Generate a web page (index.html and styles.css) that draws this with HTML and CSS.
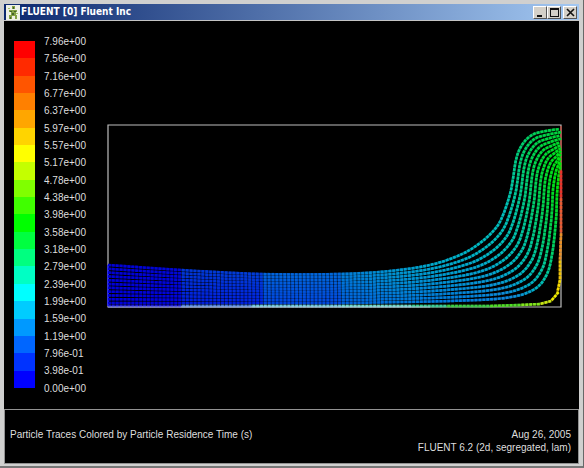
FILE: index.html
```html
<!DOCTYPE html>
<html lang="en">
<head>
<meta charset="utf-8">
<title>FLUENT [0] Fluent Inc</title>
<link rel="stylesheet" href="styles.css">
</head>
<body>
<div class="window">
  <header class="titlebar">
    <svg class="app-icon" viewBox="0 0 14 15" aria-hidden="true">
      <rect width="14" height="15" fill="#eef0e6"/>
      <path d="M6 1h3v3H6zM3 5h8v2H3zM5 7h5v4H5zM3 10h3v4H3zM9 10h2v4H9z" fill="#83a045"/>
      <path d="M7 2h1v2H7zM4 6h2v1H4zM8 6h2v1H8zM6 8h2v2H6zM4 12h1v2H4z" fill="#44632a"/>
      <path d="M2 3h2v1H2zM10 8h2v1h-2z" fill="#a9c36b"/>
    </svg>
    <h1 class="title">FLUENT [0] Fluent Inc</h1>
    <div class="controls">
      <button type="button" aria-label="Minimize"><svg viewBox="0 0 9 9"><path d="M1 7h5v2H1z"/></svg></button>
      <button type="button" aria-label="Maximize"><svg viewBox="0 0 9 9"><path fill-rule="evenodd" d="M0 0h9v9H0zM1 2v6h7V2z"/></svg></button>
      <button type="button" class="close" aria-label="Close"><svg viewBox="0 0 9 9"><path d="M1 1l7 7M8 1l-7 7" stroke="#111" stroke-width="1.6"/></svg></button>
    </div>
  </header>
  <main class="view">
    <section class="legend" aria-label="Residence time scale">
      <div class="scale" id="scale"></div>
      <ol class="labels" id="labels"></ol>
    </section>
    <svg class="plot" id="plot" viewBox="100 120 470 192" role="img" aria-label="Particle traces"></svg>
  </main>
  <footer class="caption">
    <p>Particle Traces Colored by Particle Residence Time (s)</p>
    <p class="meta">Aug 26, 2005<br>FLUENT 6.2 (2d, segregated, lam)</p>
  </footer>
</div>
<script src="script.js"></script>
</body>
</html>
```
FILE: styles.css
```css
* { box-sizing: border-box; }
body {
  margin: 0;
  background: #d4d0c8;
  font-family: "Liberation Sans", Arial, sans-serif;
  font-size: 10px;
  line-height: 13px;
  color: #dedede;
}
.window {
  display: flex;
  flex-direction: column;
  min-height: 100vh;
  padding: 4px 4px 2px;
  border-right: 1px solid #686868;
  border-bottom: 2px solid #777;
  background: #d0d0cf;
}
.titlebar {
  display: flex;
  align-items: center;
  height: 17px;
  padding: 0 2px;
  border-bottom: 1px solid #c4c4c4;
  background: linear-gradient(90deg, #0c286e, #a3c8f2);
}
.app-icon { width: 14px; height: 15px; }
.title {
  flex: 1;
  margin: 0 0 0 1px;
  font-family: "DejaVu Sans Condensed", "DejaVu Sans", sans-serif;
  font-size: 10px;
  font-weight: bold;
  line-height: 14px;
  color: #fff;
}
.controls { display: flex; }
.controls button {
  display: grid;
  place-items: center;
  width: 14px;
  height: 13px;
  padding: 0;
  border: 1px solid;
  border-color: #fff #555 #555 #fff;
  background: #d4d0c8;
}
.controls .close { margin-left: 2px; }
.controls svg { width: 9px; height: 9px; fill: #111; }
.view {
  flex: 1;
  display: flex;
  align-items: flex-start;
  padding: 12px 9px 12px 10px;
  background: #000;
}
.legend { display: flex; flex: none; width: 86px; }
.scale {
  display: flex;
  flex-direction: column;
  width: 21px;
  height: 347px;
  margin-top: 8px;
}
.scale i { flex: 1; }
.labels {
  display: flex;
  flex-direction: column;
  height: 364px;
  margin: 0 0 0 9px;
  padding: 0;
  list-style: none;
}
.labels li { flex: 1; line-height: 17px; }
.plot { flex: 1; min-width: 0; margin-top: 87px; }
.caption {
  display: flex;
  justify-content: space-between;
  align-items: center;
  min-height: 55px;
  padding: 9px 7px 0 5px;
  border: 1px solid #929292;
  background: #000;
}
.caption p { margin: 0; }
.caption > p:first-child { padding-bottom: 13px; }
.meta { text-align: right; }
```
FILE: script.js
```js
const labels = ["7.96e+00", "7.56e+00", "7.16e+00", "6.77e+00", "6.37e+00", "5.97e+00", "5.57e+00",
  "5.17e+00", "4.78e+00", "4.38e+00", "3.98e+00", "3.58e+00", "3.18e+00", "2.79e+00", "2.39e+00",
  "1.99e+00", "1.59e+00", "1.19e+00", "7.96e-01", "3.98e-01", "0.00e+00"];
const scale = ["#ff0000", "#ff2a00", "#ff5500", "#ff8000", "#ffa600", "#ffd400", "#ffff00",
  "#c4ff00", "#80ff00", "#40ff00", "#00ff00", "#00ff40", "#00ff80", "#00ffc4", "#00ffff",
  "#00ccff", "#0099ff", "#0066ff", "#0033ff", "#0000ff"];

document.getElementById("labels").innerHTML = labels.map(t => `<li>${t}</li>`).join("");
document.getElementById("scale").innerHTML = scale.map(c => `<i style="background:${c}"></i>`).join("");

// Stations along the flow: outermost trace, innermost trace, and the colour of each.
const stations = [
  [108, 265, 108, 303, [0, 0, 215], [0, 0, 220]],
  [181, 270, 181, 303, [0, 55, 215], [0, 30, 225]],
  [261, 274, 261, 303, [0, 100, 220], [0, 70, 225]],
  [340, 274, 340, 303, [0, 125, 215], [0, 95, 220]],
  [390, 271, 400, 302, [0, 150, 210], [0, 120, 220]],
  [430, 265, 450, 301, [0, 170, 205], [0, 120, 220]],
  [460, 255, 505, 298, [0, 180, 200], [15, 135, 220]],
  [480, 243, 533, 290, [0, 190, 195], [0, 175, 200]],
  [495, 229, 546, 276, [0, 190, 190], [0, 200, 160]],
  [503, 215, 552, 255, [0, 190, 190], [0, 210, 110]],
  [511, 190, 556, 220, [0, 200, 165], [0, 215, 50]],
  [516, 160, 557, 195, [0, 205, 130], [0, 225, 20]],
  [522, 145, 558, 183, [0, 210, 110], [0, 230, 10]],
  [532, 135, 559, 174, [0, 210, 90], [0, 230, 10]],
  [546, 131, 560, 168, [0, 210, 75], [0, 230, 10]],
  [560, 129, 560, 162, [0, 210, 60], [0, 230, 10]]
];
const mix = (a, b, t) => a + (b - a) * t;
const spline = (a, b, c, d, t) => 0.5 * (2 * b + (c - a) * t +
  (2 * a - 5 * b + 4 * c - d) * t * t + (3 * b - a - 3 * c + d) * t * t * t);

function dots(points, width) {
  // A dim continuous line, then one short bright dash per even step along it.
  let line = "", out = "", gap = 0;
  for (let i = 1; i < points.length; i++) {
    const p = points[i - 1], q = points[i];
    const len = Math.hypot(q.x - p.x, q.y - p.y);
    const ux = (q.x - p.x) / len, uy = (q.y - p.y) / len;
    const colour = `rgb(${p.c.map(Math.round)})`;
    line += `<path d="M${p.x} ${p.y}L${q.x} ${q.y}" stroke="${colour}" stroke-opacity=".55" stroke-width="${width}"/>`;
    while (gap < len) {
      const x = p.x + ux * gap, y = p.y + uy * gap;
      out += `<path d="M${x.toFixed(1)} ${y.toFixed(1)}l${(ux * 2.8).toFixed(1)} ${(uy * 2.8).toFixed(1)}" stroke="${colour}" stroke-width="${width}"/>`;
      gap += 3.9;
    }
    gap -= len;
  }
  return line + out;
}

function trace(k) {
  const pts = stations.map(s => [mix(s[0], s[2], k), mix(s[1], s[3], k)]);
  const list = [];
  for (let i = 0; i < pts.length - 1; i++) {
    const a = pts[Math.max(i - 1, 0)], b = pts[i], c = pts[i + 1], d = pts[Math.min(i + 2, pts.length - 1)];
    for (let j = 0; j < 10; j++) {
      const t = j / 10, stepped = i < 3 ? 0.15 * t : t;
      list.push({
        x: spline(a[0], b[0], c[0], d[0], t),
        y: spline(a[1], b[1], c[1], d[1], t),
        c: [0, 1, 2].map(n => mix(mix(stations[i][4][n], stations[i][5][n], k),
          mix(stations[i + 1][4][n], stations[i + 1][5][n], k), stepped))
      });
    }
  }
  return list;
}

// Slowest particle, travelling along the lower and right walls.
const wall = [
  [108, 306, [30, 30, 215]], [180, 306, [80, 130, 215]], [250, 306, [110, 200, 215]],
  [340, 306, [110, 215, 200]], [410, 306, [60, 205, 150]], [445, 306, [60, 205, 70]],
  [490, 306, [80, 220, 40]], [520, 305, [130, 230, 30]], [540, 304, [200, 230, 20]],
  [551, 301, [240, 235, 0]], [557, 294, [250, 220, 0]], [560, 280, [240, 195, 10]],
  [560, 260, [235, 145, 40]], [561, 235, [235, 90, 50]], [561, 200, [235, 50, 40]],
  [561, 170, [240, 40, 30]]
].map(([x, y, c]) => ({ x, y, c }));

const count = 11;
let art = '<path d="M108 125H561V307H108Z" stroke="#bdbdbd" stroke-width="1.2"/>';
art += '<path d="M108 265V306" stroke="#3030d8" stroke-width="2"/>';
art += '<path d="M561 126V172" stroke="#b84a3c" stroke-width="1.4"/>';
for (let i = 0; i < count; i++) art += dots(trace(i / (count - 1)), 2.6);
art += dots(wall, 2.6);
art += '<path d="M108 307H430" stroke="#c8d0ee" stroke-opacity=".7"/>';
document.getElementById("plot").innerHTML = `<g fill="none">${art}</g>`;
```
